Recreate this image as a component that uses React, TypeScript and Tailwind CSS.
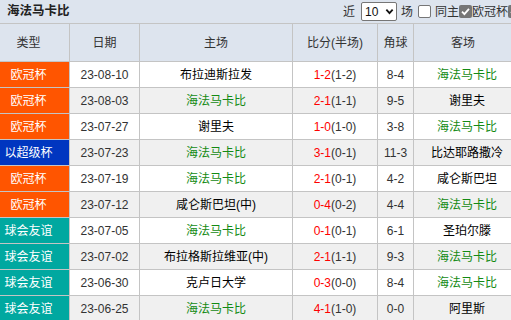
import { clsx as cn } from "clsx";

type Match = {
  league: string;
  kind: "ucl" | "isr" | "club";
  date: string;
  home: string;
  score: string;
  half: string;
  corner: string;
  away: string;
};

const MATCHES: Match[] = [
  { league: "欧冠杯", kind: "ucl", date: "23-08-10", home: "布拉迪斯拉发", score: "1-2", half: "(1-2)", corner: "8-4", away: "海法马卡比" },
  { league: "欧冠杯", kind: "ucl", date: "23-08-03", home: "海法马卡比", score: "2-1", half: "(1-1)", corner: "9-5", away: "谢里夫" },
  { league: "欧冠杯", kind: "ucl", date: "23-07-27", home: "谢里夫", score: "1-0", half: "(1-0)", corner: "3-8", away: "海法马卡比" },
  { league: "以超级杯", kind: "isr", date: "23-07-23", home: "海法马卡比", score: "3-1", half: "(0-1)", corner: "11-3", away: "比达耶路撒冷" },
  { league: "欧冠杯", kind: "ucl", date: "23-07-19", home: "海法马卡比", score: "2-1", half: "(0-1)", corner: "4-2", away: "咸仑斯巴坦" },
  { league: "欧冠杯", kind: "ucl", date: "23-07-12", home: "咸仑斯巴坦(中)", score: "0-4", half: "(0-2)", corner: "4-4", away: "海法马卡比" },
  { league: "球会友谊", kind: "club", date: "23-07-05", home: "海法马卡比", score: "0-1", half: "(0-1)", corner: "6-1", away: "圣珀尔滕" },
  { league: "球会友谊", kind: "club", date: "23-07-02", home: "布拉格斯拉维亚(中)", score: "2-1", half: "(1-1)", corner: "9-3", away: "海法马卡比" },
  { league: "球会友谊", kind: "club", date: "23-06-30", home: "克卢日大学", score: "0-3", half: "(0-0)", corner: "8-4", away: "海法马卡比" },
  { league: "球会友谊", kind: "club", date: "23-06-25", home: "海法马卡比", score: "4-1", half: "(1-0)", corner: "0-0", away: "阿里斯" },
];

const TEAM = "海法马卡比";
const GRID = "grid grid-cols-[70px_70px_153px_85px_36px_106px]";

function Checkbox({ checked }: { checked?: boolean }) {
  return (
    <span
      className={
        checked
          ? "inline-flex size-[13px] shrink-0 items-center justify-center rounded-[2px] bg-[#767676]"
          : "inline-block size-[13px] shrink-0 rounded-[2px] border border-[#767676] bg-white"
      }
    >
      {checked && (
        <svg viewBox="0 0 12 12" className="size-[11px]">
          <path d="M2.2 6.2 4.8 8.8 9.8 3.2" fill="none" stroke="white" strokeWidth="2" />
        </svg>
      )}
    </span>
  );
}

function teamClass(name: string) {
  return name === TEAM ? "text-[#138a13]" : "text-black";
}

export default function App() {
  return (
    <div
      className="w-[511px] h-[320px] overflow-hidden bg-white text-[12px] text-[#333]"
      style={{ fontFamily: '"Liberation Sans", "Noto Sans CJK SC", sans-serif' }}
    >
      <div className="w-[520px]">
        {/* title bar */}
        <div className="flex h-[24px] items-center justify-between border-b border-[#c4c4c4] bg-[#dde4ee] pl-[7px]">
          <span className="text-[12.5px] font-bold text-[#222]">海法马卡比</span>
          <div className="-mr-[1px] flex items-center whitespace-nowrap text-[#333]">
            <span>近</span>
            <span className="ml-[6px] flex h-[19px] w-[36px] items-center justify-between rounded-[2px] border border-[#767676] bg-white pl-[3px] pr-[2px] text-[#111]">
              10
              <svg viewBox="0 0 10 10" className="size-[9px]">
                <path d="M1.5 3 5 6.8 8.5 3" fill="none" stroke="#111" strokeWidth="2" />
              </svg>
            </span>
            <span className="ml-[4px]">场</span>
            <span className="ml-[5px] flex">
              <Checkbox />
            </span>
            <span className="ml-[4px]">同主</span>
            <Checkbox checked />
            <span>欧冠杯</span>
            <Checkbox checked />
          </div>
        </div>

        {/* header */}
        <div className={cn(GRID, "h-[38px] border-b border-[#c4c4c4] bg-[#dde4ee] text-[#333]")}>
          <div className="flex items-center justify-center border-r border-[#c4c4c4] pr-[12px]">类型</div>
          <div className="flex items-center justify-center border-r border-[#c4c4c4]">日期</div>
          <div className="flex items-center justify-center border-r border-[#c4c4c4]">主场</div>
          <div className="flex items-center justify-center border-r border-[#c4c4c4]">比分(半场)</div>
          <div className="flex items-center justify-center border-r border-[#c4c4c4]">角球</div>
          <div className="flex items-center justify-center pr-[8px]">客场</div>
        </div>

        {MATCHES.map((m, i) => (
          <div
            key={m.date}
            className={cn(GRID, "h-[26px] border-b border-[#c4c4c4]", i % 2 === 1 ? "bg-[#f0f0f0]" : "bg-white")}
          >
            <div
              className={cn(
                "flex items-center justify-center border-r border-[#c4c4c4] pr-[12px] text-white",
                m.kind === "ucl" && "bg-[#ff5500]",
                m.kind === "isr" && "bg-[#0036c0]",
                m.kind === "club" && "bg-[#00a8a0]",
              )}
            >
              {m.league}
            </div>
            <div className="flex items-center justify-center border-r border-[#c4c4c4]">{m.date}</div>
            <div className={cn("flex items-center justify-center whitespace-nowrap border-r border-[#c4c4c4]", teamClass(m.home))}>
              {m.home}
            </div>
            <div className="flex items-center justify-center border-r border-[#c4c4c4]">
              <span className="text-[#ff0000]">{m.score}</span>
              <span>{m.half}</span>
            </div>
            <div className="flex items-center justify-center border-r border-[#c4c4c4]">{m.corner}</div>
            <div className={cn("flex items-center justify-center whitespace-nowrap", teamClass(m.away))}>{m.away}</div>
          </div>
        ))}
      </div>
    </div>
  );
}
